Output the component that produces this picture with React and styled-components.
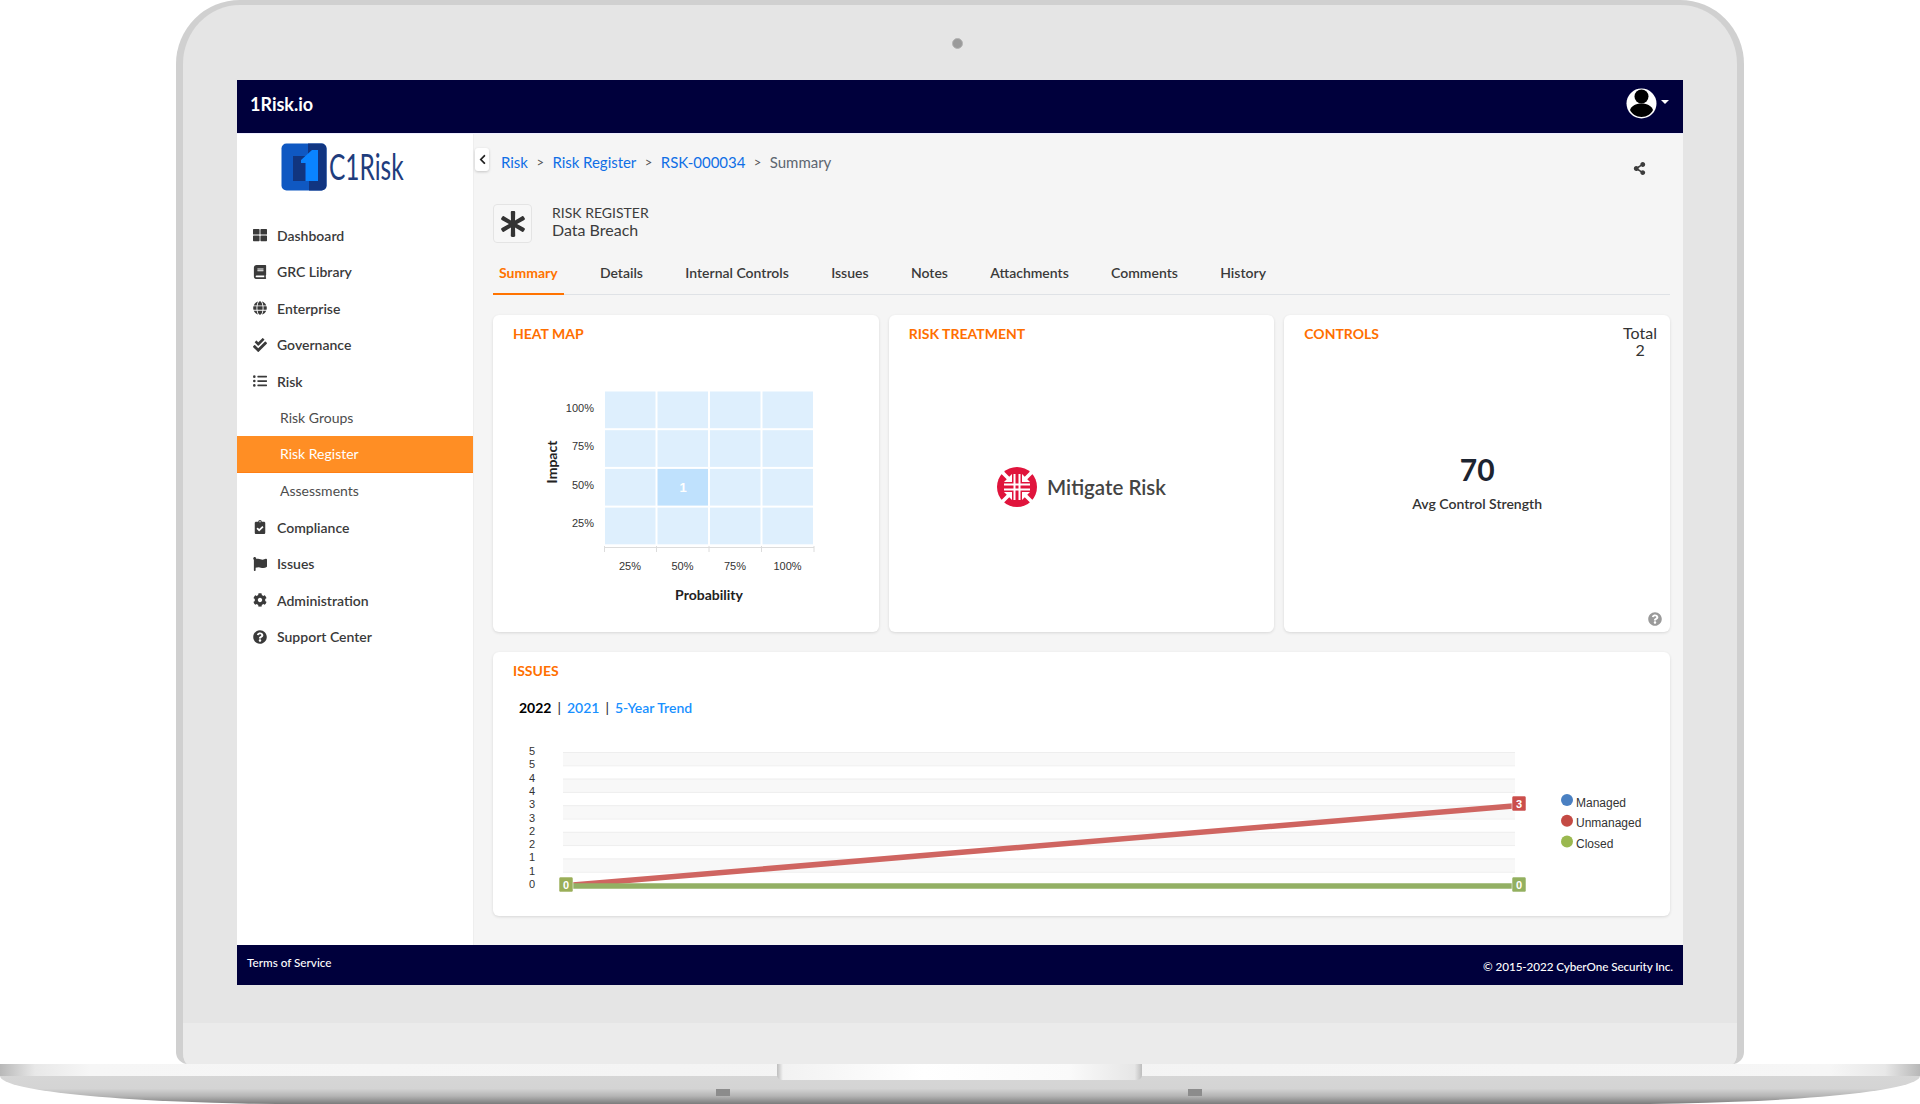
import React from 'react';
import styled, { createGlobalStyle } from 'styled-components';
import { FaThLarge, FaBook, FaGlobe, FaCheckDouble, FaListUl, FaClipboardCheck, FaFlag, FaCog, FaQuestionCircle, FaShareAlt, FaAsterisk, FaChevronLeft } from 'react-icons/fa';

const Global = createGlobalStyle`
  html, body { margin: 0; padding: 0; background: #fff; }
  body { font-family: Lato, "Open Sans", sans-serif; overflow: hidden; }
  * { box-sizing: border-box; }
`;
const Page = styled.div`width: 1920px; height: 1104px; overflow: hidden; background: #fff; display: flex; flex-direction: column; align-items: center;`;
const Lid = styled.div`
  width: 1568px; height: 1064px; flex: none; display: flex; flex-direction: column;
  background: #e5e5e5; border: solid #d0d0d0; border-width: 5px 7px 0;
  border-radius: 64px 64px 12px 12px; overflow: hidden;
`;
const CameraBar = styled.div`height: 75px; flex: none; display: flex; align-items: center; justify-content: center;`;
const Camera = styled.div`width: 11px; height: 11px; border-radius: 50%; background: #9a9a9a; border: 1px solid #b4b4b4; margin-top: 2px; margin-left: -5px;`;
const Screen = styled.div`margin: 0 54px; height: 905px; flex: none; display: flex; flex-direction: column; background: #f5f5f5;`;
const Chin = styled.div`height: 38px; flex: none; background: #e5e5e5;`;
const ChinBand = styled.div`height: 41px; flex: none; background: #ebebeb;`;

const Base = styled.div`width: 1920px; height: 40px; flex: none; position: relative; display: flex; flex-direction: column;`;
const BaseStrip = styled.div`height: 12px; flex: none; background: linear-gradient(90deg, #b8b8b8 0, #e8e8e8 35px, #f6f6f6 90px, #f3f3f3 50%, #f6f6f6 calc(100% - 90px), #e8e8e8 calc(100% - 35px), #b8b8b8 100%);`;
const BaseBody = styled.div`
  flex: 1; border-radius: 0 0 300px 300px / 0 0 28px 28px;
  background: linear-gradient(180deg, #d6d6d6 0, #d4d4d4 45%, #b4b4b4 72%, #7c7c7c 100%);
`;
const Notch = styled.div`
  position: absolute; left: 777px; top: 0; width: 365px; height: 16px; border-radius: 0 0 5px 5px;
  background: linear-gradient(90deg, #bdbdbd 0, #f2f2f2 6px, #fff 40%, #fafafa 80%, #e6e6e6 98%, #bdbdbd 100%);
`;
const BaseDot = styled.div`position: absolute; top: 25px; width: 14px; height: 7px; background: #8c8c8c; left: ${p => p.$x}px;`;

const Header = styled.header`height: 54px; flex: none; background: #00003c; border-bottom: 1px solid #eef; display: flex; align-items: center; justify-content: space-between; padding: 0 14px 6px 13px;`;
const Brand = styled.div`color: #fff; font-size: 18px; font-weight: 700;`;
const UserMenu = styled.div`display: flex; align-items: center; gap: 4px;`;
const Caret = styled.span`width: 0; height: 0; border: solid transparent; border-width: 4px 4px 0; border-top-color: #fff; margin-top: -4px;`;

const Body = styled.div`flex: 1; display: flex; min-height: 0;`;
const Sidebar = styled.nav`width: 237px; flex: none; background: #fff; border-right: 1px solid #eeeeee;`;
const LogoBlock = styled.div`height: 83px; padding: 9px 0 0 44px; display: flex; align-items: flex-start; gap: 2px;`;
const LogoText = styled.span`
  display: inline-block; color: #1f3d7d; font-size: 36px; line-height: 47px; font-weight: 400; font-family: Lato, sans-serif;
  transform: scaleX(0.68); transform-origin: left center; white-space: nowrap;
`;
const NavItem = styled.div`
  height: 36.5px; display: flex; align-items: center; padding-left: ${p => p.$sub ? 43 : 15}px;
  font-size: 14px; font-weight: ${p => p.$sub ? 400 : 600}; white-space: nowrap;
  color: ${p => p.$active ? '#fff' : p.$sub ? '#4d4d4d' : '#3a3a3a'};
  background: ${p => p.$active ? '#ff8e24' : 'transparent'};
  border-bottom: ${p => p.$active ? '1px solid #ff7f14' : '0'};
`;
const NavIcon = styled.span`width: 16px; margin-right: 9px; display: flex; justify-content: center; color: #3a3a3a; font-size: 14px;`;

const Main = styled.main`flex: 1; position: relative; padding: 0 13px 0 19px; min-width: 0;`;
const Collapse = styled.button`
  position: absolute; left: 1px; top: 14px; width: 14px; height: 23px; padding: 0; border: 0; border-radius: 3px; background: #fff;
  box-shadow: 0 1px 3px rgba(0,0,0,.2); display: flex; align-items: center; justify-content: center; color: #222; font-size: 11px;
`;
const TopRow = styled.div`height: 56px; display: flex; align-items: center; justify-content: space-between; padding-left: 8px;`;
const Crumbs = styled.div`display: flex; align-items: center; font-size: 15px; letter-spacing: -0.03px;`;
const Crumb = styled.span`color: ${p => p.$plain ? '#5d6670' : '#0f6fe6'};`;
const Sep = styled.span`color: #555; font-size: 13px; width: 24.5px; text-align: center;`;
const ShareBtn = styled.span`color: #3c3c3c; font-size: 13px; margin: 13px 24px 0 0; display: flex;`;

const TitleRow = styled.div`display: flex; gap: 20px; margin-top: 14px; height: 39px;`;
const Tile = styled.div`width: 39px; height: 39px; border: 1px solid #e4e4e4; border-radius: 4px; background: #f7f7f7; display: flex; align-items: center; justify-content: center; color: #333; font-size: 26px;`;
const TitleText = styled.div`color: #3c3c3c; line-height: 17px;`;
const Over = styled.div`font-size: 14px;`;
const Name = styled.div`font-size: 16px;`;

const Tabs = styled.div`display: flex; gap: 30.3px; margin-top: 10px; height: 42px; border-bottom: 1px solid #dfe2e6;`;
const Tab = styled.div`
  height: 42px; padding: 0 6px 2px; display: flex; align-items: center; font-size: 14px; font-weight: ${p => p.$active ? 700 : 600};
  color: ${p => p.$active ? '#ff7300' : '#3a3a3a'}; border-bottom: 2px solid ${p => p.$active ? '#ff7300' : 'transparent'};
`;

const Cards = styled.div`display: grid; grid-template-columns: repeat(3, 1fr); gap: 10px; height: 317px; margin-top: 20px;`;
const Card = styled.section`background: #fff; border-radius: 6px; box-shadow: 0 1px 3px rgba(0,0,0,.12); display: flex; flex-direction: column; position: relative; min-width: 0;`;
const CardTitle = styled.h3`margin: 0; padding: 10px 20px 0; font-size: 14px; line-height: 17px; font-weight: 700; color: #ff6f00; white-space: nowrap;`;
const ChartSvg = styled.svg`display: block; flex: none;`;
const IssuesSvg = styled(ChartSvg)`margin-top: 24px;`;
const Center = styled.div`flex: 1; display: flex; align-items: center; justify-content: center; gap: 10px; padding-bottom: 1px;`;
const TreatLabel = styled.span`font-size: 20.5px; font-weight: 600; color: #444;`;
const ControlsHead = styled.div`display: flex; justify-content: space-between; align-items: flex-start;`;
const Total = styled.div`padding: 9px 13px 0 0; font-size: 16px; line-height: 17px; text-align: center; color: #333;`;
const Score = styled.div`flex: 1; display: flex; flex-direction: column; align-items: center; padding-top: 93px;`;
const ScoreValue = styled.div`font-size: 30px; line-height: 36px; font-weight: 700; color: #1d2430;`;
const ScoreLabel = styled.div`font-size: 14px; line-height: 17px; font-weight: 600; color: #333; margin-top: 8px;`;
const Help = styled.span`position: absolute; right: 8px; bottom: 6px; color: #9a9a9a; font-size: 14px; display: flex;`;

const IssuesCard = styled(Card)`height: 264px; margin-top: 20px;`;
const Years = styled.div`display: flex; align-items: center; margin: 20px 0 0 26px; font-size: 14px; line-height: 17px; font-weight: 600;`;
const Year = styled.span`color: ${p => p.$on ? '#000' : '#1890ff'}; font-weight: ${p => p.$on ? 700 : 600};`;
const Bar = styled.span`color: #333; width: 15.5px; text-align: center; font-weight: 500;`;

const Footer = styled.footer`height: 40px; flex: none; background: #00003c; color: #fff; display: flex; justify-content: space-between; font-size: 11.700px; font-weight: 500; padding: 9px 10px 0 10px; line-height: 16px;`;
const FooterRight = styled.span`padding-top: 4px; letter-spacing: -0.08px;`;

const Logo = () => (
  <svg width="46" height="48" viewBox="0 0 46 48">
    <rect x="0.5" y="0.5" width="45" height="47" rx="5" fill="#0f58c2" />
    <path d="M27 0.5h13.5a5 5 0 0 1 5 5v37a5 5 0 0 1-5 5H28V38h-1z" fill="#113581" />
    <rect x="12" y="13" width="12" height="25" fill="#11357f" />
    <path d="M20 17l11-10h6v31H25V20h-5z" fill="#0a84ff" />
  </svg>
);

const Avatar = () => (
  <svg width="31" height="31" viewBox="0 0 31 31">
    <circle cx="15.5" cy="15.5" r="15" fill="#fff" />
    <circle cx="15.5" cy="8.500" r="7" fill="#000" />
    <path d="M4 22c1.500-4 5.500-6.500 11.500-6.500S25.500 18 27 22c-2 4-6 7-11.500 7S6 26 4 22z" fill="#000" />
  </svg>
);

const MitigateIcon = () => (
  <svg width="40" height="40" viewBox="-20 -20 40 40">
    <circle r="20" fill="#e0143c" />
    <g stroke="#fff" fill="none">
      <path d="M-13 -2.500H13M-13 2.500H13M-2.500 -13V13M2.500 -13V13" strokeWidth="2" />
      <path d="M-17 -17L-7 -7M17 -17L7 -7M17 17L7 7M-17 17L-7 7" strokeWidth="3.600" />
    </g>
    <g fill="#fff">
      <path d="M-5 -5v-8l-8 8z" />
      <path d="M5 -5v-8l8 8z" />
      <path d="M5 5v8l8 -8z" />
      <path d="M-5 5v8l-8 -8z" />
    </g>
  </svg>
);

const heatXs = [605, 657.5, 710, 762.5];
const heatYs = [391.5, 430.2, 468.9, 507.6];
const HeatMap = () => (
  <ChartSvg width="386" height="290" viewBox="493 342 386 290">
    {heatYs.map((y, r) => heatXs.map((x, c) => (
      <rect key={`${r}-${c}`} x={x} y={y} width="50.5" height="36.7" fill={r === 2 && c === 1 ? '#bfe1fd' : '#deeffd'} />
    )))}
    <text x="683" y="492" textAnchor="middle" fontFamily="Liberation Sans" fontSize="13" fontWeight="700" fill="#fff">1</text>
    <path d="M604 547.500H814M604.500 546V552M656.500 546V552M709 546V552M761.500 546V552M814 546V552" stroke="#dcdcdc" fill="none" />
    {['100%', '75%', '50%', '25%'].map((t, i) => (
      <text key={t} x="594" y={411.500 + i * 38.6} textAnchor="end" fontFamily="Liberation Sans" fontSize="11" fill="#333">{t}</text>
    ))}
    {['25%', '50%', '75%', '100%'].map((t, i) => (
      <text key={t} x={630 + i * 52.5} y="570" textAnchor="middle" fontFamily="Liberation Sans" fontSize="11" fill="#333">{t}</text>
    ))}
    <text x="709" y="600" textAnchor="middle" fontFamily="Lato" fontSize="14" fontWeight="700" fill="#222">Probability</text>
    <text transform="translate(557 462) rotate(-90)" textAnchor="middle" fontFamily="Lato" fontSize="14" fontWeight="700" fill="#222">Impact</text>
  </ChartSvg>
);

const ticks = ['5', '5', '4', '4', '3', '3', '2', '2', '1', '1', '0'];
const lineY = i => 752 + i * 13.3;
const Badge = ({ x, y, fill, label }) => (
  <g>
    <rect x={x} y={y} width="14" height="15" rx="1.500" fill={fill} stroke="#fff" strokeOpacity=".55" />
    <text x={x + 7} y={y + 11.5} textAnchor="middle" fontFamily="Liberation Sans" fontSize="11" fontWeight="700" fill="#fff">{label}</text>
  </g>
);
const legend = [['Managed', '#4a80c2'], ['Unmanaged', '#c44a44'], ['Closed', '#9ab84f']];
const IssuesChart = () => (
  <IssuesSvg width="1177" height="176" viewBox="493 740 1177 176">
    {ticks.slice(0, 10).map((_, i) => i % 2 === 0 && (
      <rect key={i} x="563" y={lineY(i)} width="952" height="13.3" fill="#f8f8f8" />
    ))}
    {ticks.map((_, i) => i < 10 && (
      <line key={i} x1="563" x2="1515" y1={lineY(i) + 0.5} y2={lineY(i) + 0.5} stroke="#eeeeee" />
    ))}
    {ticks.map((t, i) => (
      <text key={i} x="532" y={755 + i * 13.3} textAnchor="middle" fontFamily="Liberation Sans" fontSize="11" fill="#333">{t}</text>
    ))}
    <line x1="573" y1="885" x2="1513" y2="806" stroke="#cf6561" strokeWidth="5.500" />
    <line x1="573" y1="886" x2="1513" y2="886" stroke="#93b064" strokeWidth="5.500" />
    <Badge x={559} y={877} fill="#9aae58" label="0" />
    <Badge x={1512} y={796} fill="#cb4e4b" label="3" />
    <Badge x={1512} y={877} fill="#93b05f" label="0" />
    {legend.map(([t, c], i) => (
      <g key={t}>
        <circle cx="1567" cy={800 + i * 20.700} r="6" fill={c} />
        <text x="1576" y={806.5 + i * 20.700} fontFamily="Liberation Sans" fontSize="12" fill="#333">{t}</text>
      </g>
    ))}
  </IssuesSvg>
);

const nav = [
  ['Dashboard', FaThLarge], ['GRC Library', FaBook], ['Enterprise', FaGlobe], ['Governance', FaCheckDouble], ['Risk', FaListUl],
  ['Risk Groups', null, true], ['Risk Register', null, true, true], ['Assessments', null, true],
  ['Compliance', FaClipboardCheck], ['Issues', FaFlag], ['Administration', FaCog], ['Support Center', FaQuestionCircle],
];
const tabs = ['Summary', 'Details', 'Internal Controls', 'Issues', 'Notes', 'Attachments', 'Comments', 'History'];

export default function App() {
  return (
    <Page>
      <Global />
      <Lid>
        <CameraBar><Camera /></CameraBar>
        <Screen>
          <Header>
            <Brand>1Risk.io</Brand>
            <UserMenu><Avatar /><Caret /></UserMenu>
          </Header>
          <Body>
            <Sidebar>
              <LogoBlock><Logo /><LogoText>C1Risk</LogoText></LogoBlock>
              {nav.map(([label, Icon, sub, active]) => (
                <NavItem key={label} $sub={sub} $active={active}>
                  {Icon && <NavIcon><Icon /></NavIcon>}
                  {label}
                </NavItem>
              ))}
            </Sidebar>
            <Main>
              <Collapse aria-label="Collapse"><FaChevronLeft /></Collapse>
              <TopRow>
                <Crumbs>
                  <Crumb>Risk</Crumb><Sep>&gt;</Sep>
                  <Crumb>Risk Register</Crumb><Sep>&gt;</Sep>
                  <Crumb>RSK-000034</Crumb><Sep>&gt;</Sep>
                  <Crumb $plain>Summary</Crumb>
                </Crumbs>
                <ShareBtn><FaShareAlt /></ShareBtn>
              </TopRow>
              <TitleRow>
                <Tile><FaAsterisk /></Tile>
                <TitleText>
                  <Over>RISK REGISTER</Over>
                  <Name>Data Breach</Name>
                </TitleText>
              </TitleRow>
              <Tabs>
                {tabs.map((t, i) => <Tab key={t} $active={i === 0}>{t}</Tab>)}
              </Tabs>
              <Cards>
                <Card>
                  <CardTitle>HEAT MAP</CardTitle>
                  <HeatMap />
                </Card>
                <Card>
                  <CardTitle>RISK TREATMENT</CardTitle>
                  <Center><MitigateIcon /><TreatLabel>Mitigate Risk</TreatLabel></Center>
                </Card>
                <Card>
                  <ControlsHead>
                    <CardTitle>CONTROLS</CardTitle>
                    <Total>Total<br />2</Total>
                  </ControlsHead>
                  <Score>
                    <ScoreValue>70</ScoreValue>
                    <ScoreLabel>Avg Control Strength</ScoreLabel>
                  </Score>
                  <Help><FaQuestionCircle /></Help>
                </Card>
              </Cards>
              <IssuesCard>
                <CardTitle>ISSUES</CardTitle>
                <Years>
                  <Year $on>2022</Year><Bar>|</Bar><Year>2021</Year><Bar>|</Bar><Year>5-Year Trend</Year>
                </Years>
                <IssuesChart />
              </IssuesCard>
            </Main>
          </Body>
          <Footer>
            <span>Terms of Service</span>
            <FooterRight>© 2015-2022 CyberOne Security Inc.</FooterRight>
          </Footer>
        </Screen>
        <Chin />
        <ChinBand />
      </Lid>
      <Base>
        <BaseStrip />
        <BaseBody />
        <Notch />
        <BaseDot $x={716} />
        <BaseDot $x={1188} />
      </Base>
    </Page>
  );
}
